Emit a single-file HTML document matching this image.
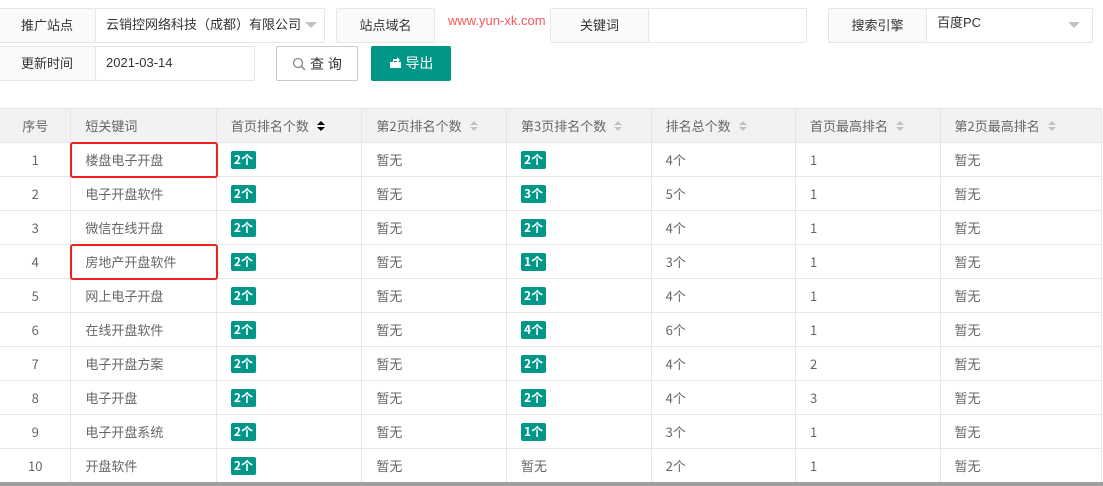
<!DOCTYPE html>
<html><head><meta charset="utf-8"><style>
*{box-sizing:border-box;margin:0;padding:0}
body{width:1103px;height:486px;background:#fff;font-family:"Liberation Sans","Noto Sans CJK SC",sans-serif;font-size:13px;color:#333;position:relative;overflow:hidden}
.a{position:absolute}
.lab{position:absolute;background:#fafafa;border:1px solid #e6e6e6;border-radius:2px;text-align:center;line-height:33px;font-size:13px;color:#333}
.inp{position:absolute;background:#fff;border:1px solid #e6e6e6;border-radius:2px;line-height:31px;padding-left:10px;font-size:13px;color:#333}
.tri{position:absolute;width:0;height:0;border-left:6px solid transparent;border-right:6px solid transparent;border-top:6px solid #c2c2c2}
table{position:absolute;left:-1px;top:108px;border-collapse:collapse;table-layout:fixed;font-family:"Noto Sans CJK SC","Liberation Sans",sans-serif}
td,th{height:34px;border:1px solid #e6e6e6;font-weight:normal;text-align:left;padding-left:14px;color:#666;font-size:13px;white-space:nowrap;line-height:18px}
th{background:#f2f2f2}
td:first-child,th:first-child{text-align:center;padding-left:0}
.b{display:inline-block;background:#009688;color:#fff;font-weight:bold;font-size:12px;line-height:18px;padding:0 3px;border-radius:2px;vertical-align:middle}
.s{display:inline-block;vertical-align:middle;margin-left:8px;width:9px;height:12px;position:relative}
.s:before{content:"";position:absolute;left:0;top:0;border-left:4px solid transparent;border-right:4px solid transparent;border-bottom:4px solid #c2c2c2}
.s:after{content:"";position:absolute;left:0;top:6px;border-left:4px solid transparent;border-right:4px solid transparent;border-top:4px solid #c2c2c2}
.s.d:before{border-bottom-color:#000}.s.d:after{border-top-color:#000}
.red{position:absolute;border:2px solid #f0211d;border-radius:3px}
</style></head><body>
<div class="lab" style="left:-2px;top:8px;width:98px;height:35px">推广站点</div>
<div class="inp" style="left:95px;top:8px;width:230px;height:35px">云销控网络科技（成都）有限公司</div>
<div class="tri" style="left:305px;top:22px"></div>
<div class="lab" style="left:336px;top:8px;width:99px;height:35px">站点域名</div>
<div class="a" style="left:448px;top:13px;color:#f7565a;font-size:13px">www.yun-xk.com</div>
<div class="lab" style="left:550px;top:8px;width:99px;height:35px">关键词</div>
<div class="inp" style="left:648px;top:8px;width:159px;height:35px"></div>
<div class="lab" style="left:828px;top:8px;width:99px;height:35px">搜索引擎</div>
<div class="inp" style="left:926px;top:8px;width:167px;height:35px;line-height:27px">百度PC</div>
<div class="tri" style="left:1068px;top:22px"></div>
<div class="lab" style="left:-2px;top:46px;width:98px;height:35px">更新时间</div>
<div class="inp" style="left:95px;top:46px;width:160px;height:35px">2021-03-14</div>
<div class="a" style="left:276px;top:46px;width:82px;height:35px;border:1px solid #c9c9c9;border-radius:2px;text-align:center;line-height:35px;font-size:14px;color:#333">
<svg width="14" height="14" viewBox="0 0 14 14" style="vertical-align:-2px"><circle cx="6" cy="6" r="4.5" fill="none" stroke="#888" stroke-width="1.3"/><path d="M9.3 9.3L13 13" stroke="#888" stroke-width="1.5"/></svg> 查 询</div>
<div class="a" style="left:371px;top:46px;width:80px;height:35px;background:#009688;border-radius:2px;text-align:center;line-height:35px;font-size:14px;color:#fff">
<svg width="13" height="13" viewBox="0 0 13 13" style="vertical-align:-1px"><rect x="1" y="6" width="11" height="6" fill="#fff"/><path d="M4 6V3h4V1l3 3-3 3V5H5v1z" fill="#fff"/></svg> 导出</div>
<table>
<colgroup><col style="width:72px"><col style="width:146px"><col style="width:146px"><col style="width:145px"><col style="width:145px"><col style="width:145px"><col style="width:145px"><col style="width:162px"></colgroup>
<tr><th>序号</th><th>短关键词</th><th>首页排名个数<span class="s d"></span></th><th>第2页排名个数<span class="s"></span></th><th>第3页排名个数<span class="s"></span></th><th>排名总个数<span class="s"></span></th><th>首页最高排名<span class="s"></span></th><th>第2页最高排名<span class="s"></span></th></tr>
<tr><td>1</td><td>楼盘电子开盘</td><td><span class="b">2个</span></td><td>暂无</td><td><span class="b">2个</span></td><td>4个</td><td>1</td><td>暂无</td></tr>
<tr><td>2</td><td>电子开盘软件</td><td><span class="b">2个</span></td><td>暂无</td><td><span class="b">3个</span></td><td>5个</td><td>1</td><td>暂无</td></tr>
<tr><td>3</td><td>微信在线开盘</td><td><span class="b">2个</span></td><td>暂无</td><td><span class="b">2个</span></td><td>4个</td><td>1</td><td>暂无</td></tr>
<tr><td>4</td><td>房地产开盘软件</td><td><span class="b">2个</span></td><td>暂无</td><td><span class="b">1个</span></td><td>3个</td><td>1</td><td>暂无</td></tr>
<tr><td>5</td><td>网上电子开盘</td><td><span class="b">2个</span></td><td>暂无</td><td><span class="b">2个</span></td><td>4个</td><td>1</td><td>暂无</td></tr>
<tr><td>6</td><td>在线开盘软件</td><td><span class="b">2个</span></td><td>暂无</td><td><span class="b">4个</span></td><td>6个</td><td>1</td><td>暂无</td></tr>
<tr><td>7</td><td>电子开盘方案</td><td><span class="b">2个</span></td><td>暂无</td><td><span class="b">2个</span></td><td>4个</td><td>2</td><td>暂无</td></tr>
<tr><td>8</td><td>电子开盘</td><td><span class="b">2个</span></td><td>暂无</td><td><span class="b">2个</span></td><td>4个</td><td>3</td><td>暂无</td></tr>
<tr><td>9</td><td>电子开盘系统</td><td><span class="b">2个</span></td><td>暂无</td><td><span class="b">1个</span></td><td>3个</td><td>1</td><td>暂无</td></tr>
<tr><td>10</td><td>开盘软件</td><td><span class="b">2个</span></td><td>暂无</td><td>暂无</td><td>2个</td><td>1</td><td>暂无</td></tr>
</table>
<div class="a" style="left:0;top:482px;width:1103px;height:4px;background:#9e9e9e"></div>
<div class="red" style="left:70px;top:142px;width:148px;height:36px"></div>
<div class="red" style="left:70px;top:244px;width:148px;height:36px"></div>
</body></html>
